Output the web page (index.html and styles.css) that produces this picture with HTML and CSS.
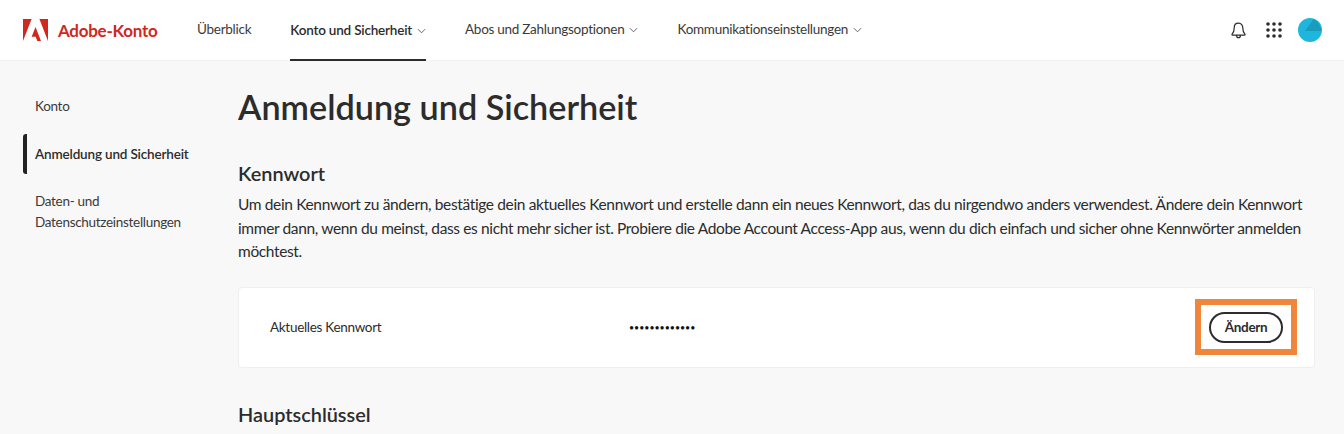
FILE: index.html
```html
<!DOCTYPE html>
<html lang="de">
<head>
    <meta charset="UTF-8">
    <title>Adobe-Konto</title>
    <link rel="stylesheet" href="styles.css">
</head>
<body>
    <header class="topbar">
        <div class="brand">
            <svg class="brand-logo" viewBox="0 0 25 22" width="25" height="22">
                <path d="M0 0h8.600L0 22z M25 0h-8.600L25 22z M12.500 8l5.500 14h-3.700l-1.600-4.200H8.700z" fill="#d0281e"/>
            </svg>
            <span class="brand-name">Adobe-Konto</span>
        </div>
        <nav class="topnav">
            <a class="topnav-item">Überblick</a>
            <a class="topnav-item current">Konto und Sicherheit
                <svg class="chev" viewBox="0 0 10 6" width="9" height="6"><path d="M1 1l4 4 4-4" fill="none" stroke="#555" stroke-width="1"/></svg>
            </a>
            <a class="topnav-item">Abos und Zahlungsoptionen
                <svg class="chev" viewBox="0 0 10 6" width="9" height="6"><path d="M1 1l4 4 4-4" fill="none" stroke="#555" stroke-width="1"/></svg>
            </a>
            <a class="topnav-item">Kommunikationseinstellungen
                <svg class="chev" viewBox="0 0 10 6" width="9" height="6"><path d="M1 1l4 4 4-4" fill="none" stroke="#555" stroke-width="1"/></svg>
            </a>
        </nav>
        <div class="top-icons">
            <svg class="bell" viewBox="0 0 16 18" width="15" height="17">
                <path d="M8 1.200c-3 0-4.600 2.200-4.600 5 0 3.200-.6 5-2.200 6.600-.4.500-.2 1.200.5 1.200h12.600c.7 0 .9-.7.5-1.200C13.200 11.200 12.600 9.400 12.600 6.200c0-2.800-1.600-5-4.600-5z M6 14.200c0 1.400.9 2.400 2 2.400s2-1 2-2.400" fill="none" stroke="#2c2c2c" stroke-width="1.300"/>
            </svg>
            <svg class="grid" viewBox="0 0 16 16" width="16" height="16" fill="#2c2c2c">
                <circle cx="2" cy="2" r="1.800"/><circle cx="8" cy="2" r="1.800"/><circle cx="14" cy="2" r="1.800"/>
                <circle cx="2" cy="8" r="1.800"/><circle cx="8" cy="8" r="1.800"/><circle cx="14" cy="8" r="1.800"/>
                <circle cx="2" cy="14" r="1.800"/><circle cx="8" cy="14" r="1.800"/><circle cx="14" cy="14" r="1.800"/>
            </svg>
            <svg class="avatar" viewBox="0 0 24 24" width="24" height="24">
                <circle cx="12" cy="12" r="12" fill="#1fb6de"/>
                <path d="M7 13L15.500 1C19.500 2.500 22.500 7 23.500 13z" fill="#1a9dbd"/>
            </svg>
        </div>
    </header>

    <div class="page">
        <aside class="sidenav">
            <a class="side-item">Konto</a>
            <a class="side-item active">Anmeldung und Sicherheit</a>
            <a class="side-item">Daten- und Datenschutzeinstellungen</a>
        </aside>
        <main class="content">
            <h1>Anmeldung und Sicherheit</h1>
            <h2>Kennwort</h2>
            <p class="intro">Um dein Kennwort zu ändern, bestätige dein aktuelles Kennwort und erstelle dann ein neues Kennwort, das du nirgendwo anders verwendest. Ändere dein Kennwort immer dann, wenn du meinst, dass es nicht mehr sicher ist. Probiere die Adobe Account Access-App aus, wenn du dich einfach und sicher ohne Kennwörter anmelden möchtest.</p>
            <section class="card">
                <span class="card-label">Aktuelles Kennwort</span>
                <span class="card-value">•••••••••••••</span>
                <div class="highlight"><button class="btn">Ändern</button></div>
            </section>
            <h2 class="second">Hauptschlüssel</h2>
        </main>
    </div>
</body>
</html>
```

FILE: styles.css
```css
* {
    box-sizing: border-box;
}
html, body {
    height: 100%;
    overflow: hidden;
}
body {
    margin: 0;
    background-color: #f8f8f8;
    color: #2c2c2c;
    font-family: Lato, "Open Sans", sans-serif;
}
.topbar {
    height: 61px;
    background-color: white;
    border-bottom: 1px solid #f0f0f0;
    display: flex;
    align-items: stretch;
    padding-left: 23px;
    padding-right: 22px;
}
.brand {
    display: flex;
    align-items: center;
    gap: 10px;
    width: 174px;
}
.brand-name {
    color: #d0281e;
    font-size: 17px;
    font-weight: 700;
    letter-spacing: -0.27px;
}
.topnav {
    display: flex;
    flex: 1;
}
.topnav-item {
    display: flex;
    align-items: center;
    gap: 5px;
    font-size: 13.500px;
    letter-spacing: -0.27px;
    margin-right: 39px;
    padding-bottom: 2px;
    color: #3a3a3a;
}
.topnav-item.current {
    color: #2c2c2c;
    font-weight: 600;
    letter-spacing: -0.2px;
    border-bottom: 2px solid #2c2c2c;
    height: 61px;
    padding-bottom: 0;
}
.chev {
    margin-top: 2px;
}
.top-icons {
    display: flex;
    align-items: center;
}
.grid {
    margin-left: 20px;
    margin-right: 16px;
}
.page {
    display: flex;
}
.sidenav {
    width: 238px;
    padding-top: 25px;
    padding-left: 23px;
    flex-shrink: 0;
    display: flex;
    flex-direction: column;
    gap: 8px;
}
.side-item {
    display: block;
    font-size: 13.500px;
    letter-spacing: -0.3px;
    line-height: 21px;
    padding: 10px 0 9px 8px;
    width: 185px;
    color: #3a3a3a;
    border-left: 4px solid transparent;
    border-radius: 3px;
}
.side-item.active {
    font-weight: 600;
    letter-spacing: -0.17px;
    color: #2c2c2c;
    border-left-color: #222;
    width: 200px;
    white-space: nowrap;
    margin-bottom: -1px;
}
.content {
    width: 1077px;
}
h1 {
    margin: 0;
    padding-top: 21px;
    font-size: 34.200px;
    line-height: 50px;
    font-weight: 600;
}
h2 {
    margin: 0;
    margin-top: 28px;
    font-size: 19.900px;
    line-height: 27px;
    font-weight: 600;
}
.intro {
    margin: 6px 0 0;
    font-size: 15.500px;
    letter-spacing: -0.36px;
    line-height: 23.500px;
}
.card {
    margin-top: 23px;
    height: 81px;
    background-color: white;
    border: 1px solid #efefef;
    border-radius: 4px;
    display: flex;
    align-items: center;
    padding-left: 31px;
    padding-right: 17px;
}
.card-label {
    width: 359px;
    font-size: 13.500px;
    letter-spacing: -0.3px;
}
.card-value {
    font-size: 8.800px;
    color: #111;
    flex: 1;
}
.highlight {
    border: 6px solid #f0863a;
    width: 102px;
    height: 56px;
    display: flex;
    align-items: center;
    justify-content: center;
}
.btn {
    width: 74px;
    height: 31px;
    background-color: white;
    border: 2px solid #2c2c2c;
    border-radius: 16px;
    color: #2c2c2c;
    font-family: inherit;
    font-size: 13.500px;
    font-weight: 700;
    letter-spacing: -0.3px;
    padding: 0;
}
h2.second {
    margin-top: 33px;
}
```
